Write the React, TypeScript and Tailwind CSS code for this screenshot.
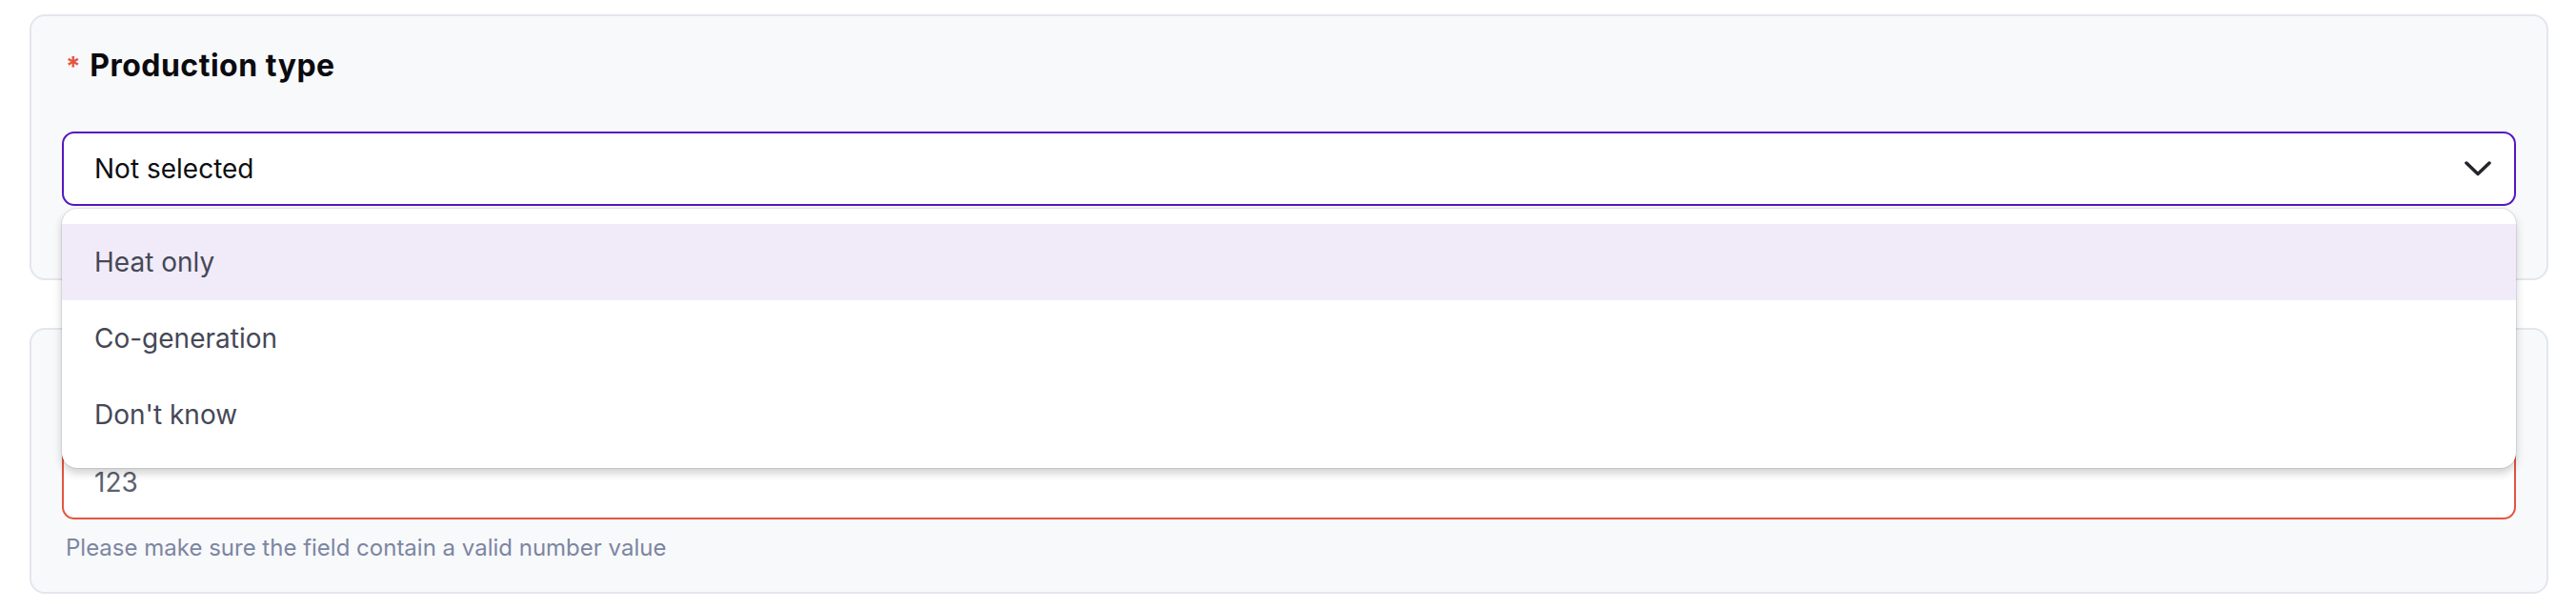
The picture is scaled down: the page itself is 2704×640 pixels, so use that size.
const options = ["Heat only", "Co-generation", "Don't know"];

function ChevronDown() {
  return (
    <svg width="28" height="16" viewBox="0 0 28 16" fill="none" stroke="#24252b" strokeWidth="3.5" strokeLinecap="round" strokeLinejoin="round">
      <polyline points="2,2 14,13.5 26,2" />
    </svg>
  );
}

function Label({ children }: { children: React.ReactNode }) {
  return (
    <h2 className="flex items-baseline text-[32px] leading-[48px] font-bold tracking-[0.5px] text-[#0b0b0f]">
      <span className="ml-[4px] mr-[9px] text-[28px] text-[#e4553f]">*</span>
      {children}
    </h2>
  );
}

export default function App() {
  return (
    <div className="min-h-screen bg-white pl-[31px] pr-[29px] pt-[15px] font-['Inter',sans-serif]">
      <div className="flex flex-col gap-[50px]">
        {/* Production type - select with open menu */}
        <section className="relative z-10 rounded-[16px] border-2 border-[#e3e6ee] bg-[#f8f9fb] px-[32px] pt-[28px] pb-[28px]">
          <Label>Production type</Label>
          <div className="relative mt-[44px]">
            <button className="flex h-[78px] w-full items-center justify-between rounded-[13px] border-2 border-[#5517c1] bg-white pl-[32px] pr-[24px] text-left text-[28px] text-[#0e0e12]">
              <span>Not selected</span>
              <ChevronDown />
            </button>
            <ul className="absolute left-0 right-0 top-[calc(100%+3px)] z-20 rounded-[16px] bg-white py-[16px] shadow-[0_5px_10px_rgba(0,0,0,0.2),0_0_0_1px_rgba(30,40,80,0.09)]">
              {options.map((o, i) => (
                <li
                  key={o}
                  className={`flex h-[80px] items-center pl-[34px] text-[28px] text-[#454857] ${i === 0 ? "bg-[#f1ebf9]" : ""}`}
                >
                  {o}
                </li>
              ))}
            </ul>
          </div>
          <p className="mt-[12px] h-[36px]" />
        </section>

        {/* Numeric field with validation error */}
        <section className="rounded-[16px] border-2 border-[#e3e6ee] bg-[#f8f9fb] px-[32px] pt-[28px] pb-[28px]">
          <Label>Annual production</Label>
          <input
            readOnly
            value="123"
            className="mt-[44px] block h-[78px] w-full rounded-[13px] border-2 border-[#e4553f] bg-white pl-[32px] text-[28px] text-[#5c6270] outline-none"
          />
          <p className="mt-[12px] pl-[4px] text-[24px] leading-[36px] text-[#7c86a2]">
            Please make sure the field contain a valid number value
          </p>
        </section>
      </div>
    </div>
  );
}
